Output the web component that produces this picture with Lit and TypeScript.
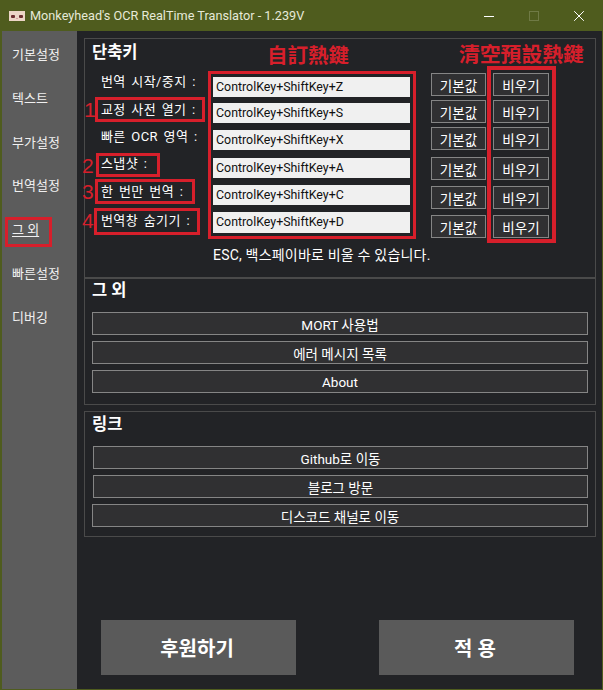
import { LitElement, html, css } from "lit";
import { customElement } from "lit/decorators.js";

const NAV = ["기본설정", "텍스트", "부가설정", "번역설정", "그 외", "빠른설정", "디버깅"];
const KEYS = [
  ["번역 시작/중지 :", "Z"],
  ["교정 사전 열기 :", "S"],
  ["빠른 OCR 영역 :", "X"],
  ["스냅샷 :", "A"],
  ["한 번만 번역 :", "C"],
  ["번역창 숨기기 :", "D"],
];

@customElement("app-root")
export class AppRoot extends LitElement {
  static styles = css`
    :host {
      display: block;
      position: relative;
      width: 603px;
      height: 690px;
      overflow: hidden;
      font-family: Roboto, "Noto Sans CJK KR", sans-serif;
      color: #fff;
    }
    .window {
      height: 690px;
      box-sizing: border-box;
      display: flex;
      flex-direction: column;
      background: #4f5c1e;
      padding: 0 1px 1px 2px;
    }
    .title {
      height: 31px;
      flex: none;
      display: flex;
      align-items: center;
      font-size: 12.7px;
      color: #e6e9d8;
      position: relative;
    }
    .logo {
      margin-left: 7px;
      margin-right: 5px;
      display: block;
    }
    .controls {
      margin-left: auto;
      display: flex;
      align-items: center;
      gap: 35px;
      padding-right: 18px;
    }
    .controls svg {
      display: block;
    }
    .body {
      flex: 1;
      display: flex;
      min-height: 0;
    }
    .side {
      width: 75px;
      flex: none;
      background: #5c5c5c;
      display: flex;
      flex-direction: column;
      padding-top: 14px;
      box-sizing: border-box;
    }
    .nav {
      height: 43.8px;
      line-height: 20px;
      padding-left: 10px;
      font-size: 13px;
      color: #f0f0f0;
    }
    .nav.current span {
      text-decoration: underline;
      text-underline-offset: 2px;
    }
    .main {
      flex: 1;
      background: #222326;
      padding: 7px 6px 14px 7px;
      display: flex;
      flex-direction: column;
      min-width: 0;
    }
    .group {
      border: 1px solid #4a4a4a;
      padding: 4px 7px 0;
      box-sizing: border-box;
    }
    .g1 {
      height: 240px;
    }
    .g2 {
      height: 128px;
      margin-top: -1px;
      border-top-width: 2px;
      padding-top: 2px;
    }
    .g3 {
      height: 126px;
      margin-top: 6px;
      padding-top: 3px;
    }
    h2 {
      margin: 0;
      font-size: 16.5px;
      line-height: 20px;
      font-weight: 700;
      color: #fff;
    }
    .keys {
      display: flex;
      margin-top: 9px;
    }
    .labels {
      width: 112px;
      margin-left: 9px;
      flex: none;
      display: grid;
      grid-template-rows: 28px 27px 27px 28px 29px 20px;
      font-size: 13px;
      line-height: 20px;
      letter-spacing: 0.4px;
      word-spacing: 2px;
      white-space: nowrap;
    }
    .inputs {
      width: 197px;
      flex: none;
      display: grid;
      grid-template-rows: 26px 27px 28px 27px 27px 21px;
      margin-top: 5px;
    }
    .input {
      background: #f0f0f0;
      color: #111;
      font-size: 12.4px;
      height: 20px;
      line-height: 20px;
      padding-left: 3px;
    }
    .input:last-child {
      height: 21px;
    }
    .buttons {
      margin-left: 21px;
      margin-top: 1px;
      display: grid;
      grid-template-columns: 55px 56px;
      column-gap: 7px;
      grid-template-rows: 27px 27px 30px 29px 29px 23px;
    }
    button {
      font: inherit;
      color: #fff;
      background: #303032;
      border: 1px solid #858585;
      padding: 0;
      margin: 0;
      display: block;
      box-sizing: border-box;
      font-size: 13.5px;
    }
    .buttons button {
      height: 23px;
    }
    .note {
      margin: 7px 0 0 121px;
      font-size: 14px;
      line-height: 20px;
      letter-spacing: 0.2px;
      white-space: nowrap;
    }
    .stack {
      display: flex;
      flex-direction: column;
      gap: 6px;
    }
    .stack button {
      height: 23px;
    }
    .g2 .stack {
      margin-top: 11px;
    }
    .g3 .stack {
      margin-top: 11px;
      margin-left: 1px;
    }
    .g3 .stack button:last-child {
      margin-left: -1px;
    }
    .footer {
      margin-top: auto;
      display: flex;
      gap: 83px;
      padding-left: 17px;
    }
    .footer button {
      width: 195px;
      height: 55px;
      background: #5a5a5a;
      border: none;
      font-size: 20px;
      font-weight: 700;
      padding-right: 3px;
    }
    .mark {
      position: absolute;
      box-sizing: border-box;
      border: 3px solid #d71f2b;
    }
    .m-inputs { left: 208px; top: 71px; width: 208px; height: 168px; }
    .m-clear { left: 487px; top: 66px; width: 69px; height: 177px; border-width: 4px; }
    .m-1 { left: 95px; top: 97px; width: 110px; height: 25px; }
    .m-2 { left: 96px; top: 153px; width: 64px; height: 24px; }
    .m-3 { left: 95px; top: 179px; width: 100px; height: 25px; }
    .m-4 { left: 94px; top: 208px; width: 106px; height: 27px; }
    .m-nav { left: 5px; top: 217px; width: 47px; height: 30px; }
    .note-red {
      position: absolute;
      color: #d71f2b;
      font-family: "Noto Sans CJK TC", sans-serif;
      font-weight: 700;
      white-space: nowrap;
    }
    .t-a { left: 267px; top: 40px; font-size: 20.5px; line-height: 28px; }
    .t-b { left: 459px; top: 39px; font-size: 20.8px; line-height: 28px; }
    .num {
      position: absolute;
      color: #d71f2b;
      font-size: 21px;
      line-height: 24px;
      font-family: "Liberation Sans", sans-serif;
    }
    .n1 { left: 84px; top: 98px; }
    .n2 { left: 82px; top: 154px; }
    .n3 { left: 82px; top: 180px; }
    .n4 { left: 82px; top: 209px; }
  `;

  render() {
    return html`
      <div class="window">
        <div class="title">
          <svg class="logo" width="16" height="10" viewBox="0 0 16 10">
            <rect width="16" height="10" fill="#ecd6c6" />
            <rect x="2" y="4" width="4" height="3" rx="1" fill="#6b2f2f" />
            <rect x="10" y="4" width="4" height="3" rx="1" fill="#6b2f2f" />
            <rect x="7" y="7" width="2" height="1" fill="#d9a0a0" />
          </svg>
          <span>Monkeyhead's OCR RealTime Translator - 1.239V</span>
          <div class="controls">
            <svg width="10" height="10" viewBox="0 0 10 10"><path d="M0 5.5H10" stroke="#fff" fill="none" /></svg>
            <svg width="10" height="10" viewBox="0 0 10 10"><rect x=".5" y=".5" width="9" height="9" stroke="#6f7a45" fill="none" /></svg>
            <svg width="10" height="10" viewBox="0 0 10 10"><path d="M.2 .2L9.8 9.8M9.8 .2L.2 9.8" stroke="#fff" fill="none" /></svg>
          </div>
        </div>
        <div class="body">
          <nav class="side">
            ${NAV.map(
              (n) => html`<div class="nav ${n === "그 외" ? "current" : ""}"><span>${n}</span></div>`
            )}
          </nav>
          <main class="main">
            <section class="group g1">
              <h2>단축키</h2>
              <div class="keys">
                <div class="labels">${KEYS.map(([l]) => html`<div>${l}</div>`)}</div>
                <div class="inputs">
                  ${KEYS.map(([, k]) => html`<div class="input">ControlKey+ShiftKey+${k}</div>`)}
                </div>
                <div class="buttons">
                  ${KEYS.map(() => html`<button>기본값</button><button>비우기</button>`)}
                </div>
              </div>
              <div class="note">ESC, 백스페이바로 비울 수 있습니다.</div>
            </section>
            <section class="group g2">
              <h2>그 외</h2>
              <div class="stack">
                <button>MORT 사용법</button>
                <button>에러 메시지 목록</button>
                <button>About</button>
              </div>
            </section>
            <section class="group g3">
              <h2>링크</h2>
              <div class="stack">
                <button>Github로 이동</button>
                <button>블로그 방문</button>
                <button>디스코드 채널로 이동</button>
              </div>
            </section>
            <div class="footer">
              <button>후원하기</button>
              <button>적 용</button>
            </div>
          </main>
        </div>
      </div>
      <div class="mark m-inputs"></div>
      <div class="mark m-clear"></div>
      <div class="mark m-1"></div>
      <div class="mark m-2"></div>
      <div class="mark m-3"></div>
      <div class="mark m-4"></div>
      <div class="mark m-nav"></div>
      <div class="note-red t-a">自訂熱鍵</div>
      <div class="note-red t-b">清空預設熱鍵</div>
      <div class="num n1">1</div>
      <div class="num n2">2</div>
      <div class="num n3">3</div>
      <div class="num n4">4</div>
    `;
  }
}
